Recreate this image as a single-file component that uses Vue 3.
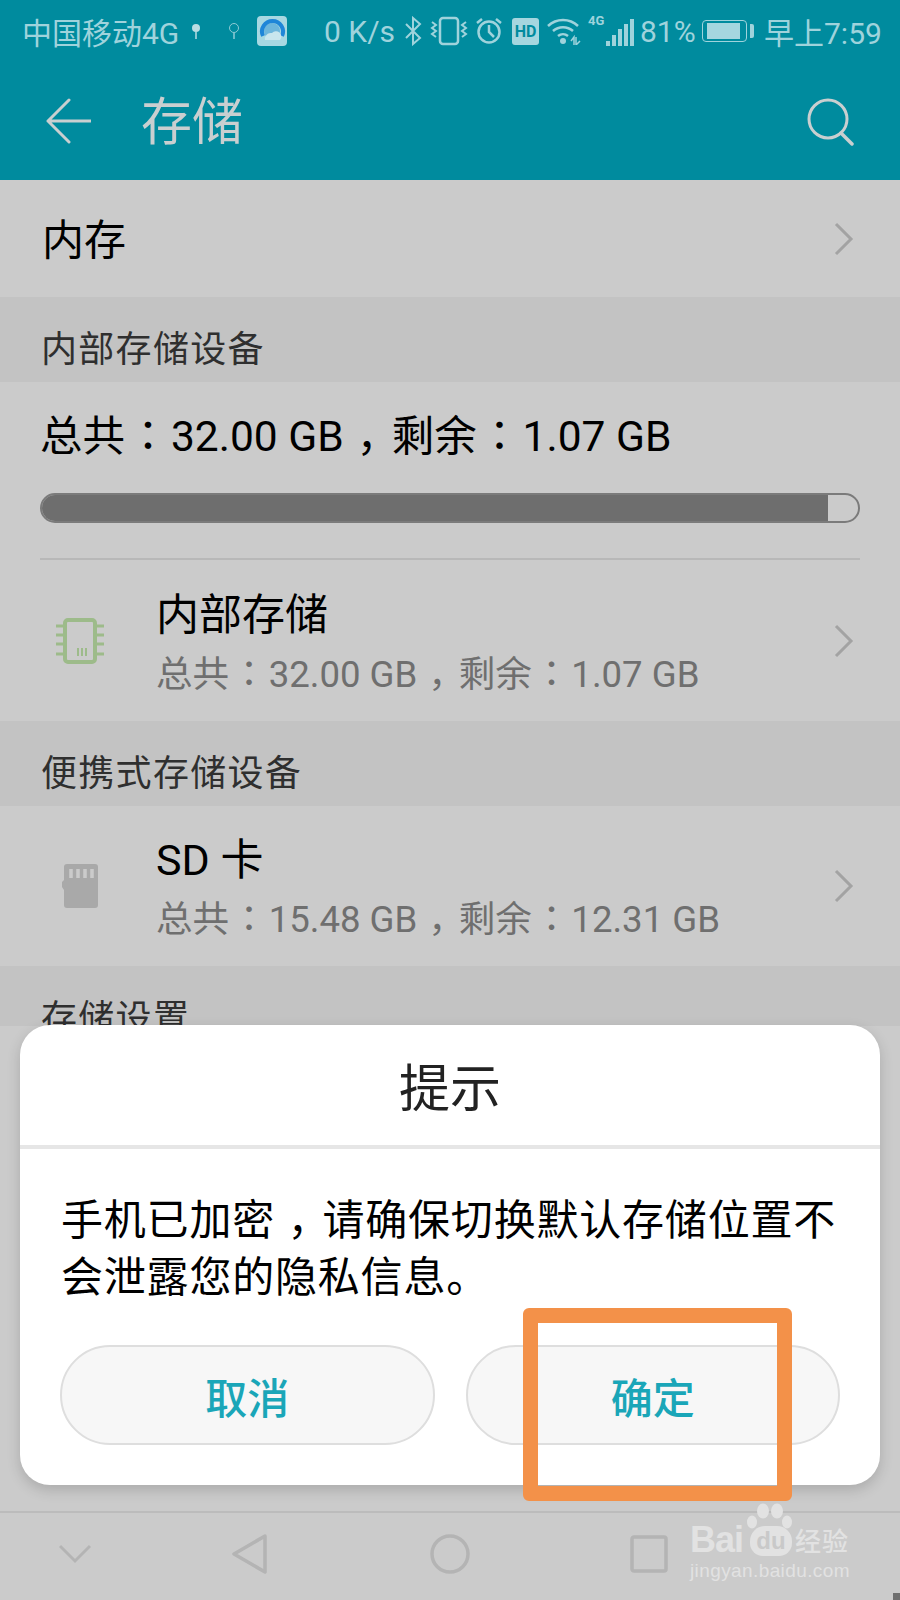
<template>
  <div class="screen">
    <header class="appbar">
      <div class="status">
        <span class="carrier">中国移动4G</span>
        <svg class="tiny" width="14" height="20" viewBox="0 0 14 20"><circle cx="7" cy="7" r="4" fill="#b9dde3" /><path d="M7 11v7" stroke="#b9dde3" stroke-width="1.5" /></svg>
        <svg class="tiny second" width="14" height="20" viewBox="0 0 14 20"><circle cx="7" cy="7" r="4.5" fill="none" stroke="#8fcbd5" /><path d="M7 12v6" stroke="#8fcbd5" stroke-width="1.5" /></svg>
        <svg class="app" width="30" height="30" viewBox="0 0 30 30">
          <rect width="30" height="30" rx="4" fill="#a7d8e2" />
          <circle cx="15" cy="15" r="8" fill="#6db6dc" />
          <path d="M6 20a10.5 10.5 0 1 1 19 0" fill="none" stroke="#1f86d8" stroke-width="4" />
          <path d="M8 24a6 6 0 0 1 7-7 5 5 0 0 1 8 7z" fill="#c9e6ee" />
        </svg>
        <span class="speed">0 K/s</span>
        <svg class="bt" width="18" height="30" viewBox="0 0 18 30"><path d="M2 8l14 14-7 6V2l7 6L2 22" fill="none" stroke="#9fd3dc" stroke-width="2" /></svg>
        <svg class="vib" width="38" height="30" viewBox="0 0 38 30">
          <rect x="10" y="2" width="18" height="26" rx="3" fill="none" stroke="#9fd3dc" stroke-width="2.5" />
          <path d="M2 6l4 3-4 3 4 3-4 3 4 3M36 6l-4 3 4 3-4 3 4 3-4 3" fill="none" stroke="#9fd3dc" stroke-width="2" />
        </svg>
        <svg class="alarm" width="28" height="28" viewBox="0 0 28 28">
          <circle cx="14" cy="15" r="10.5" fill="none" stroke="#9fd3dc" stroke-width="2.5" />
          <path d="M14 8v7l5 5M2 6l5-4M26 6l-5-4" fill="none" stroke="#9fd3dc" stroke-width="2.5" />
        </svg>
        <span class="hd">HD</span>
        <svg class="wifi" width="34" height="28" viewBox="0 0 34 28">
          <path d="M1 9a22 22 0 0 1 30 0M6 14a15 15 0 0 1 20 0M11 19a8 8 0 0 1 10 0" fill="none" stroke="#9fd3dc" stroke-width="2.5" />
          <circle cx="16" cy="24" r="3" fill="#9fd3dc" />
          <path d="M24 24l3-4v8M29 20v8l4-4" fill="none" stroke="#9fd3dc" stroke-width="1.5" />
        </svg>
        <span class="signal">
          <span class="net">4G</span>
          <i v-for="h in bars" :key="h" class="bar" :style="{ height: h + 'px' }"></i>
        </span>
        <span class="pct">81%</span>
        <span class="battery"><span class="level"></span></span>
        <span class="nub"></span>
        <span class="clock">早上7:59</span>
      </div>
      <div class="toolbar">
        <svg class="back" width="46" height="46" viewBox="0 0 46 46"><path d="M24 2L3 23l21 21M3 23h43" fill="none" stroke="#c9cfd0" stroke-width="3" stroke-linecap="round" stroke-linejoin="round" /></svg>
        <h1 class="title">存储</h1>
        <svg class="search" width="48" height="48" viewBox="0 0 48 48">
          <circle cx="21" cy="21" r="19" fill="none" stroke="#c9cfd0" stroke-width="3" />
          <path d="M34 35l11 11" stroke="#c9cfd0" stroke-width="3.5" stroke-linecap="round" />
        </svg>
      </div>
    </header>

    <div class="row memory">
      <span class="row-name">内存</span>
      <svg class="chev" width="20" height="34" viewBox="0 0 20 34"><path d="M2 2l15 15L2 32" fill="none" stroke="#a3a3a3" stroke-width="3" /></svg>
    </div>

    <div class="section">内部存储设备</div>
    <div class="panel">
      <div class="total">
        <template v-for="(p, i) in split(internal)" :key="i"><span :class="markClass(p)">{{ p }}</span></template>
      </div>
      <div class="progress"><div class="progress-fill"></div></div>
      <div class="rule"></div>
      <div class="row storage">
        <svg class="item-icon" width="48" height="46" viewBox="0 0 48 46">
          <rect x="9" y="2" width="30" height="42" rx="3" fill="none" stroke="#9dbb8a" stroke-width="4" />
          <path d="M0 8h8M0 17h8M0 26h8M0 36h8M40 8h8M40 17h8M40 26h8M40 36h8" stroke="#9dbb8a" stroke-width="3" />
          <path d="M22 30v8M26 30v8M30 30v8" stroke="#9dbb8a" stroke-width="2" />
        </svg>
        <div class="item-text">
          <div class="item-name">内部存储</div>
          <div class="item-sub">
            <template v-for="(p, i) in split(internal)" :key="i"><span :class="markClass(p)">{{ p }}</span></template>
          </div>
        </div>
        <svg class="chev" width="20" height="34" viewBox="0 0 20 34"><path d="M2 2l15 15L2 32" fill="none" stroke="#a3a3a3" stroke-width="3" /></svg>
      </div>
    </div>

    <div class="section">便携式存储设备</div>
    <div class="row storage sd">
      <svg class="item-icon" width="48" height="44" viewBox="0 0 48 44">
        <path d="M10 3a3 3 0 0 1 3-3h28a3 3 0 0 1 3 3v38a3 3 0 0 1-3 3H13a3 3 0 0 1-3-3V26l-2-3v-5l2-2z" fill="#a9a9a9" />
        <path d="M17 5v9M24 5v9M31 5v9M38 5v9" stroke="#cbcbcb" stroke-width="3.5" />
      </svg>
      <div class="item-text">
        <div class="item-name">SD 卡</div>
        <div class="item-sub">
          <template v-for="(p, i) in split(sdCard)" :key="i"><span :class="markClass(p)">{{ p }}</span></template>
        </div>
      </div>
      <svg class="chev" width="20" height="34" viewBox="0 0 20 34"><path d="M2 2l15 15L2 32" fill="none" stroke="#a3a3a3" stroke-width="3" /></svg>
    </div>

    <div class="section last">存储设置</div>
    <div class="rest"></div>

    <nav class="navbar">
      <svg width="32" height="20" viewBox="0 0 32 20"><path d="M1 2l15 15L31 2" fill="none" stroke="#b4b4b4" stroke-width="3" /></svg>
      <svg class="nav-back" width="38" height="42" viewBox="0 0 38 42"><path d="M34 3L3 21l31 18z" fill="none" stroke="#b4b4b4" stroke-width="3.5" stroke-linejoin="round" /></svg>
      <svg class="nav-home" width="40" height="40" viewBox="0 0 40 40"><circle cx="20" cy="20" r="18" fill="none" stroke="#b4b4b4" stroke-width="3.5" /></svg>
      <svg class="nav-recent" width="38" height="38" viewBox="0 0 38 38"><rect x="2" y="2" width="34" height="34" rx="2" fill="none" stroke="#b4b4b4" stroke-width="3.5" /></svg>
    </nav>

    <div class="dialog">
      <div class="dialog-title">提示</div>
      <div class="dialog-body">
        <template v-for="(p, i) in split(message)" :key="i"><span :class="markClass(p)">{{ p }}</span></template>
      </div>
      <div class="actions">
        <button class="btn">取消</button>
        <button class="btn">确定</button>
      </div>
    </div>

    <div class="callout"></div>

    <div class="watermark">
      <div class="wm-top">
        <span class="wm-bai">Bai</span>
        <span class="wm-du">du
          <svg class="paw" width="48" height="30" viewBox="0 0 48 30">
            <ellipse cx="5" cy="20" rx="5" ry="6.5" fill="#e2e2e2" />
            <ellipse cx="16" cy="9" rx="6" ry="7.5" fill="#e2e2e2" />
            <ellipse cx="30" cy="9" rx="6" ry="7.5" fill="#e2e2e2" />
            <ellipse cx="40" cy="20" rx="5" ry="6.5" fill="#e2e2e2" />
          </svg>
        </span>
        <span class="wm-cn">经验</span>
      </div>
      <div class="wm-url">jingyan.baidu.com</div>
    </div>
    <div class="corner"></div>
  </div>
</template>

<script setup>
const bars = [5, 11, 17, 22, 27]
const internal = '总共：32.00 GB，剩余：1.07 GB'
const sdCard = '总共：15.48 GB，剩余：12.31 GB'
const message = '手机已加密，请确保切换默认存储位置不会泄露您的隐私信息。'

// full-width punctuation sits in the middle of its box on this phone's font
const split = (text) => text.split(/([：，])/)
const markClass = (part) => {
  if (part === '：') return 'colon'
  if (part === '，') return 'comma'
  return ''
}
</script>

<style>
html, body {
  margin: 0;
  background: #c9c9c9;
}
</style>

<style scoped>
.screen {
  position: relative;
  width: 900px;
  height: 1600px;
  overflow: hidden;
  display: flex;
  flex-direction: column;
  background: #cbcbcb;
  font-family: Roboto, "Noto Sans CJK SC", sans-serif;
  color: #000;
}

.colon,
.comma {
  font-family: "Noto Sans CJK KR", sans-serif;
  line-height: 0;
}

.colon {
  margin: 0 0.04em;
}

.comma {
  display: inline-block;
  width: 1.13em;
  padding-left: 0.3em;
  box-sizing: border-box;
  letter-spacing: -0.17em;
  white-space: nowrap;
}

.appbar {
  height: 180px;
  flex: none;
  background: #008b9e;
}

.status {
  height: 62px;
  display: flex;
  align-items: center;
  padding-left: 22px;
  color: #9fd3dc;
  font-size: 30px;
}

.carrier {
  width: 156px;
  white-space: nowrap;
}

.tiny {
  margin-left: 11px;
}

.tiny.second {
  margin-left: 24px;
}

.app {
  margin-left: 16px;
}

.speed {
  width: 72px;
  margin-left: 37px;
  white-space: nowrap;
}

.bt {
  margin-left: 8px;
}

.vib {
  margin-left: 8px;
}

.alarm {
  margin-left: 7px;
}

.hd {
  width: 27px;
  height: 27px;
  margin-left: 9px;
  border-radius: 3px;
  background: #a5d6df;
  color: #008b9e;
  font-size: 16px;
  font-weight: 700;
  line-height: 27px;
  text-align: center;
}

.wifi {
  margin-left: 8px;
}

.signal {
  position: relative;
  width: 46px;
  height: 30px;
  margin-left: 7px;
  display: flex;
  align-items: flex-end;
  justify-content: flex-end;
  gap: 2px;
}

.net {
  position: absolute;
  left: 0;
  top: -3px;
  font-size: 13px;
  font-weight: 700;
}

.bar {
  width: 4px;
  background: #9fd3dc;
}

.pct {
  width: 56px;
  margin-left: 6px;
  flex: none;
}

.battery {
  width: 45px;
  height: 22px;
  margin-left: 6px;
  padding: 2px;
  border: 1.5px solid #9fd3dc;
  border-radius: 4px;
  box-sizing: border-box;
  flex: none;
}

.level {
  display: block;
  width: 84%;
  height: 100%;
  margin-left: 2px;
  background: #a5d6df;
}

.nub {
  width: 4px;
  height: 14px;
  margin-left: 3px;
  background: #9fd3dc;
  border-radius: 0 2px 2px 0;
}

.clock {
  margin-left: 10px;
  white-space: nowrap;
}

.toolbar {
  height: 118px;
  display: flex;
  align-items: flex-start;
  padding: 36px 0 0 45px;
  position: relative;
}

.title {
  margin: -11px 0 0 50px;
  font-size: 51px;
  font-weight: 400;
  line-height: 72px;
  color: #c9cfd0;
}

.search {
  margin-left: auto;
  margin-right: 45px;
}

.row {
  display: flex;
  align-items: center;
}

.memory {
  height: 117px;
  padding: 0 46px 0 42px;
  flex: none;
}

.row-name {
  font-size: 42px;
  margin-top: -4px;
}

.chev {
  margin-left: auto;
}

.section {
  height: 85px;
  flex: none;
  box-sizing: border-box;
  padding: 30px 0 0 41px;
  background: #c3c3c3;
  color: #2f2f2f;
  font-size: 36px;
  line-height: 46px;
  letter-spacing: 1.3px;
  overflow: hidden;
}

.panel {
  height: 339px;
  flex: none;
  box-sizing: border-box;
  padding: 0 40px;
}

.total {
  height: 111px;
  padding-top: 27px;
  box-sizing: border-box;
  font-size: 42.5px;
  line-height: 56px;
  white-space: nowrap;
}

.progress {
  height: 30px;
  box-sizing: border-box;
  border: 2px solid #7b7b7b;
  border-radius: 15px;
  overflow: hidden;
}

.progress-fill {
  width: 96.3%;
  height: 100%;
  background: #6e6e6e;
}

.rule {
  height: 2px;
  margin-top: 35px;
  background: #b8b8b8;
}

.storage {
  height: 161px;
  padding: 0;
}

.panel .storage {
  padding-right: 6px;
}

.sd {
  height: 160px;
  flex: none;
  padding: 0 46px 0 38px;
}

.item-icon {
  margin-left: 16px;
  flex: none;
}

.item-text {
  margin-left: 52px;
  padding-top: 5px;
}

.sd .item-text {
  margin-left: 54px;
}

.item-name {
  font-size: 43px;
  line-height: 56px;
}

.item-sub {
  margin-top: 7px;
  font-size: 36.6px;
  line-height: 50px;
  color: #6f6f6f;
  white-space: nowrap;
}

.section.last {
  height: 60px;
  flex: none;
}

.rest {
  flex: 1;
}

.navbar {
  height: 89px;
  flex: none;
  border-top: 2px solid #bcbcbc;
  position: relative;
  display: flex;
  align-items: center;
  padding: 0 0 6px 59px;
  box-sizing: border-box;
}

.nav-back {
  margin-left: 140px;
}

.nav-home {
  margin-left: 161px;
}

.nav-recent {
  margin-left: 160px;
}

.dialog {
  position: absolute;
  left: 20px;
  top: 1025px;
  width: 860px;
  height: 460px;
  box-sizing: border-box;
  background: #fff;
  border-radius: 30px;
  box-shadow: 0 5px 14px rgba(0, 0, 0, 0.16);
  display: flex;
  flex-direction: column;
}

.dialog-title {
  height: 120px;
  flex: none;
  border-bottom: 4px solid #e6e6e6;
  font-size: 51px;
  line-height: 129px;
  text-align: center;
  color: #222;
}

.dialog-body {
  padding: 43px 20px 0 41px;
  height: 196px;
  box-sizing: border-box;
  flex: none;
  font-size: 42px;
  line-height: 57px;
  letter-spacing: 0.8px;
}

.actions {
  display: flex;
  gap: 31px;
  padding: 0 40px;
}

.btn {
  flex: 1;
  height: 100px;
  padding: 0;
  background: #f7f7f7;
  border: 2px solid #dedede;
  border-radius: 50px;
  color: #1aa6b8;
  font-family: inherit;
  font-size: 42px;
  font-weight: 500;
}

.callout {
  position: absolute;
  left: 523px;
  top: 1308px;
  width: 269px;
  height: 193px;
  box-sizing: border-box;
  border: 15px solid #f39149;
  border-radius: 6px;
}

.watermark {
  position: absolute;
  left: 690px;
  top: 1498px;
  width: 170px;
  color: #e2e2e2;
}

.wm-top {
  display: flex;
  align-items: flex-end;
  height: 62px;
  font-family: "Liberation Sans", sans-serif;
  font-weight: 700;
}

.wm-bai {
  font-size: 36px;
  line-height: 40px;
  letter-spacing: -1px;
}

.wm-du {
  position: relative;
  width: 42px;
  height: 30px;
  margin-left: 7px;
  margin-bottom: 4px;
  border-radius: 15px 15px 13px 13px;
  background: #e2e2e2;
  color: #c9c9c9;
  font-size: 24px;
  line-height: 30px;
  text-align: center;
}

.paw {
  position: absolute;
  left: -3px;
  top: -24px;
}

.wm-cn {
  margin-left: 3px;
  font-family: "Noto Sans CJK SC", sans-serif;
  font-size: 26px;
  font-weight: 500;
  line-height: 40px;
  letter-spacing: 1px;
  white-space: nowrap;
}

.wm-url {
  font-family: "Liberation Sans", sans-serif;
  font-size: 19px;
  line-height: 22px;
  letter-spacing: 0.4px;
  white-space: nowrap;
}

.corner {
  position: absolute;
  right: 0;
  bottom: 0;
  width: 7px;
  height: 7px;
  background: #6f6f6f;
}
</style>
